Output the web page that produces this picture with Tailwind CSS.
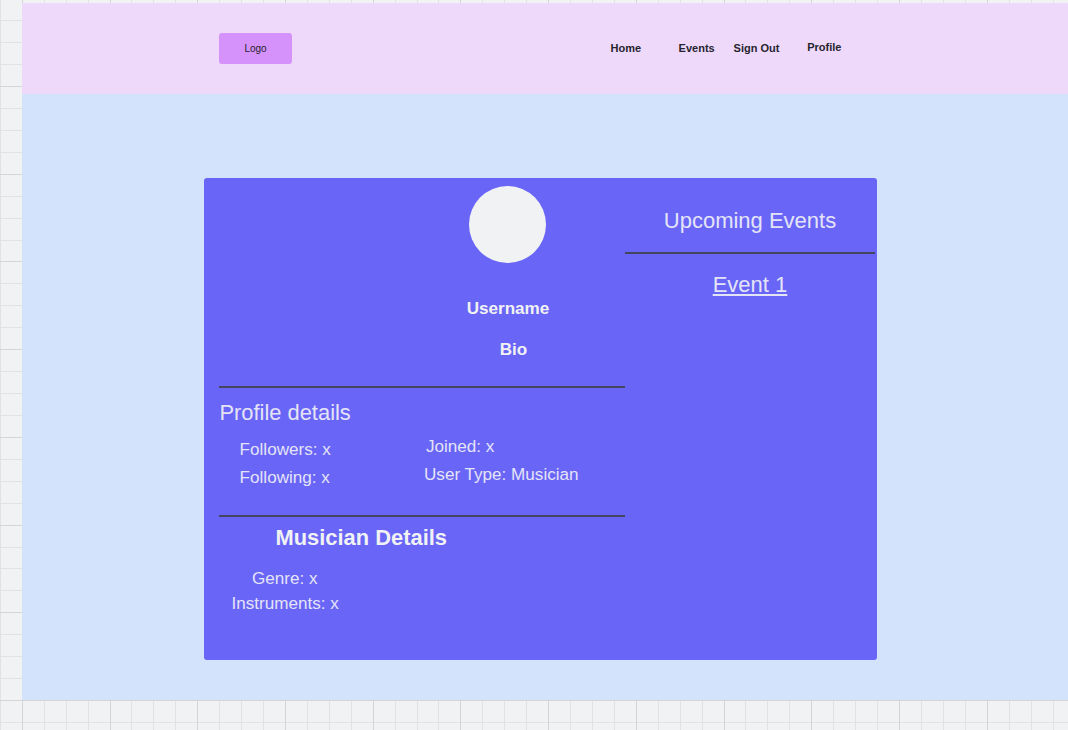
<!DOCTYPE html>
<html lang="en">
<head>
<meta charset="utf-8">
<title>Profile wireframe</title>
<script src="https://cdn.jsdelivr.net/npm/@tailwindcss/browser@4"></script>
</head>
<body class="relative h-[730px] w-[1068px] overflow-hidden bg-[#f1f2f4] font-['Liberation_Sans',sans-serif] whitespace-nowrap">
<!-- canvas grid -->
<svg class="absolute inset-0 -z-10" width="1068" height="730" shape-rendering="crispEdges" fill="none">
  <path id="minor" stroke="#e1e2e4"/>
  <path id="major" stroke="#d4d5d7"/>
</svg>
<div class="ml-[22px] flex h-[701px] flex-col border-b border-[#d4d5d7] pt-[3px]">
  <header class="flex h-[91px] items-start bg-[#eed9fb] pl-[197px] text-[11px] leading-4 text-[#26242c]">
    <div class="mt-[30px] flex h-[31px] w-[73px] items-center justify-center rounded-[3px] bg-[#d592fa] text-[10px]">Logo</div>
    <nav class="mt-[37px] ml-[318.6px] flex font-bold">
      <a class="w-[68px]">Home</a>
      <a class="w-[55px]">Events</a>
      <a class="w-[73.6px]">Sign Out</a>
      <a class="-mt-px">Profile</a>
    </nav>
  </header>
  <main class="flex-1 bg-[#d3e3fc] pt-[84px] pl-[182px]">
    <section class="flex h-[482px] w-[673px] rounded-[3px] bg-[#6965f6] text-[17.1px] leading-5 text-[#e4e4f7]">
      <div class="ml-[15px] w-[406px]">
        <div class="flex h-[208px] flex-col items-center pt-2 pl-[171px] text-[#f1f2f4]">
          <div class="size-[77px] rounded-full bg-[#f1f2f4]"></div>
          <h1 class="mt-9 pl-px font-bold">Username</h1>
          <p class="mt-[21px] pl-[12px] font-bold">Bio</p>
        </div>
        <div class="h-[129px] border-t-2 border-[#44455f]">
          <h2 class="mt-[13px] pl-[0.4px] text-[21.9px] leading-6">Profile details</h2>
          <div class="mt-3 flex">
            <div class="mt-[3px] w-[205px] pl-[20.6px]">
              <p>Followers: x</p>
              <p class="mt-2">Following: x</p>
            </div>
            <div>
              <p class="pl-[2px]">Joined: x</p>
              <p class="mt-2">User Type: Musician</p>
            </div>
          </div>
        </div>
        <div class="border-t-2 border-[#44455f]">
          <h2 class="mt-[9px] pl-[56.5px] text-[21.9px] leading-6 font-bold text-[#f1f2f4]">Musician Details</h2>
          <p class="mt-[19px] pl-[33px]">Genre: x</p>
          <p class="mt-[5px] pl-[12.4px]">Instruments: x</p>
        </div>
      </div>
      <aside class="w-[250px] text-center text-[22px] leading-6">
        <h2 class="h-[74px] pt-[31px]">Upcoming Events</h2>
        <div class="h-[2px] bg-[#44455f]"></div>
        <a class="mt-[19px] block underline">Event 1</a>
      </aside>
    </section>
  </main>
</div>
<script>
  const paths = { minor: '', major: '' };
  for (let i = -1; i < 48; i++) {
    const x = Math.floor(22.3 + 21.93 * i) + 0.5;
    paths[i % 4 ? 'minor' : 'major'] += `M${x} 0V730`;
  }
  for (let i = -3; i < 30; i++) {
    const y = Math.floor(86.5 + 21.93 * i) + 0.5;
    paths[i % 4 ? 'minor' : 'major'] += `M0 ${y}H1068`;
  }
  document.getElementById('minor').setAttribute('d', paths.minor);
  document.getElementById('major').setAttribute('d', paths.major);
</script>
</body>
</html>
